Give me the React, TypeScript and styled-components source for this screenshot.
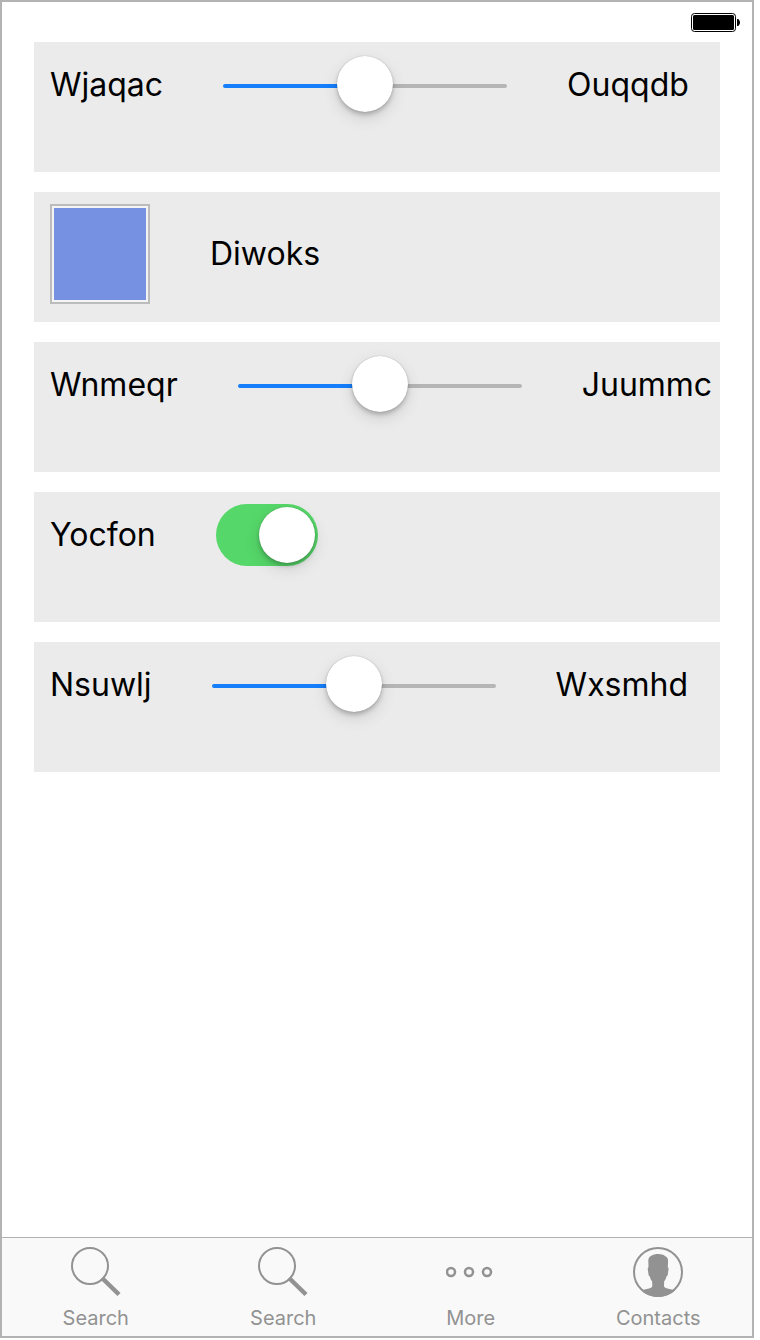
import React, { useState } from "react";
import styled, { createGlobalStyle } from "styled-components";

const GlobalStyle = createGlobalStyle`
  *, *::before, *::after { box-sizing: border-box; }
  body {
    margin: 0;
    background: #ffffff;
    color: #000000;
    font-family: Inter, "Liberation Sans", sans-serif;
  }
`;

const Screen = styled.div`
  display: flex;
  flex-direction: column;
  min-height: calc(100vh - 2px);
  margin: 0 6px 2px 0;
  border: 2px solid #b3b3b3;
  background: #ffffff;
`;

const StatusBar = styled.header`
  display: flex;
  justify-content: flex-end;
  align-items: flex-start;
  height: 40px;
  padding: 11px 12px 0 0;
`;

const Cards = styled.main`
  flex: 1;
  display: flex;
  flex-direction: column;
  gap: 20px;
  padding: 0 32px 20px;
`;

const Card = styled.section`
  display: flex;
  align-items: flex-start;
  height: 130px;
  padding: 12px 0 0 16px;
  background: #ebebeb;
`;

const Line = styled.div`
  display: flex;
  align-items: center;
  gap: 60px;
`;

const Caption = styled.label`
  font-size: 32px;
  line-height: 40px;
  white-space: nowrap;
`;

const thumbShadow = `
  0 0 1px rgba(0, 0, 0, 0.3),
  0 3px 4px rgba(0, 0, 0, 0.2),
  0 6px 16px rgba(0, 0, 0, 0.12)
`;

const Range = styled.input<{ $value: number }>`
  appearance: none;
  flex: none;
  width: 284px;
  height: 62px;
  margin: 0;
  padding: 2px 0 0;
  background: transparent;

  &::-webkit-slider-runnable-track {
    height: 4px;
    border-radius: 2px;
    background: linear-gradient(
      to right,
      #157efb ${(p) => p.$value}%,
      #b5b5b5 ${(p) => p.$value}%
    );
  }

  &::-webkit-slider-thumb {
    appearance: none;
    width: 56px;
    height: 56px;
    margin-top: -28px;
    border-radius: 50%;
    background: #ffffff;
    box-shadow: ${thumbShadow};
  }
`;

const Toggle = styled.input`
  appearance: none;
  display: flex;
  flex: none;
  width: 102px;
  height: 62px;
  margin: 0;
  padding: 3px;
  border-radius: 31px;
  background: #c8c8c8;

  &::before {
    content: "";
    width: 56px;
    height: 56px;
    border-radius: 50%;
    background: #ffffff;
    box-shadow: ${thumbShadow};
  }

  &:checked {
    justify-content: flex-end;
    background: #55d769;
  }
`;

const ColorWell = styled.input`
  appearance: none;
  flex: none;
  width: 100px;
  height: 100px;
  margin: 0;
  padding: 2px;
  border: 2px solid #bcbcbc;
  background: #f4f4f4;

  &::-webkit-color-swatch-wrapper {
    padding: 0;
  }

  &::-webkit-color-swatch {
    border: 0;
    border-radius: 0;
  }
`;

const TabBar = styled.nav`
  display: flex;
  height: 99px;
  border-top: 1px solid #b2b2b2;
  background: #f9f9f9;
`;

const Tab = styled.a`
  flex: 1;
  display: flex;
  flex-direction: column;
  align-items: center;
  gap: 9px;
  padding-top: 9px;
  color: #929292;
  font-size: 20px;
  line-height: 24px;
  text-decoration: none;
`;

function SliderCard({ id, label, trailing }: { id: string; label: string; trailing: string }) {
  const [value, setValue] = useState(50);
  return (
    <Card>
      <Line>
        <Caption htmlFor={id}>{label}</Caption>
        <Range
          id={id}
          type="range"
          min={0}
          max={100}
          value={value}
          $value={value}
          onChange={(e) => setValue(Number(e.target.value))}
        />
        <Caption htmlFor={id}>{trailing}</Caption>
      </Line>
    </Card>
  );
}

function BatteryIcon() {
  return (
    <svg width="49" height="19" viewBox="0 0 49 19" role="img" aria-label="Battery full">
      <rect x="0.5" y="0.5" width="44" height="18" rx="3" fill="none" stroke="#000" />
      <rect x="2" y="2" width="41" height="15" rx="1.5" fill="#000" />
      <path d="M46 6h1c1.200 .6 2 2 2 3.500s-.8 2.900-2 3.500h-1z" fill="#000" />
    </svg>
  );
}

function SearchIcon() {
  return (
    <svg width="50" height="50" viewBox="0 0 50 50" fill="none" stroke="currentColor" aria-hidden="true">
      <circle cx="19" cy="19" r="18" strokeWidth="2" />
      <path d="M31 31L48 47.500" strokeWidth="4.5" />
    </svg>
  );
}

function MoreIcon() {
  return (
    <svg width="50" height="50" viewBox="0 0 50 50" fill="none" stroke="currentColor" strokeWidth="2.5" aria-hidden="true">
      <circle cx="5" cy="25" r="4" />
      <circle cx="23" cy="25" r="4" />
      <circle cx="41" cy="25" r="4" />
    </svg>
  );
}

function ContactsIcon() {
  return (
    <svg width="50" height="50" viewBox="0 0 50 50" aria-hidden="true">
      <circle cx="25" cy="25" r="24" fill="none" stroke="currentColor" strokeWidth="2" />
      <path
        d="M15.300 14c0-4 2.500-5.300 4.700-6.100 2.500-1 7-1 9.800-.2 1.200.3 1.800.9 2.400 1.500 2.200.9 2.900 2.800 2.900 5.200l-.3 5.800c.7.300.9 1.200.7 2.300l-.8 5.500c-.2.900-.7 1.200-1.200 1.200-.4 2.200-1 3.600-2.300 5.100l-.2 4.200c0 1.500.8 2.300 2.500 2.800 2.700.8 5.300.8 8.500 2.200C37.500 47.500 31 50 25 50S12.500 47.500 8.500 43.500c3-1.400 5.600-1.400 8.300-2.200 1.700-.5 2.500-1.300 2.500-2.800l-.2-4.200c-1.300-1.500-1.900-2.900-2.300-5.100-.5 0-1-.3-1.200-1.200l-.8-5.500c-.2-1.100 0-2 .7-2.300z"
        fill="currentColor"
      />
    </svg>
  );
}

const tabs = [
  { id: "search", label: "Search", Icon: SearchIcon },
  { id: "search-all", label: "Search", Icon: SearchIcon },
  { id: "more", label: "More", Icon: MoreIcon },
  { id: "contacts", label: "Contacts", Icon: ContactsIcon },
];

export default function App() {
  return (
    <>
      <GlobalStyle />
      <Screen>
        <StatusBar>
          <BatteryIcon />
        </StatusBar>
        <Cards>
          <SliderCard id="wjaqac" label="Wjaqac" trailing="Ouqqdb" />
          <Card>
            <Line>
              <ColorWell id="diwoks" type="color" defaultValue="#7690e2" />
              <Caption htmlFor="diwoks">Diwoks</Caption>
            </Line>
          </Card>
          <SliderCard id="wnmeqr" label="Wnmeqr" trailing="Juummc" />
          <Card>
            <Line>
              <Caption htmlFor="yocfon">Yocfon</Caption>
              <Toggle id="yocfon" type="checkbox" role="switch" defaultChecked />
            </Line>
          </Card>
          <SliderCard id="nsuwlj" label="Nsuwlj" trailing="Wxsmhd" />
        </Cards>
        <TabBar>
          {tabs.map(({ id, label, Icon }) => (
            <Tab key={id} href={`#${id}`}>
              <Icon />
              {label}
            </Tab>
          ))}
        </TabBar>
      </Screen>
    </>
  );
}
